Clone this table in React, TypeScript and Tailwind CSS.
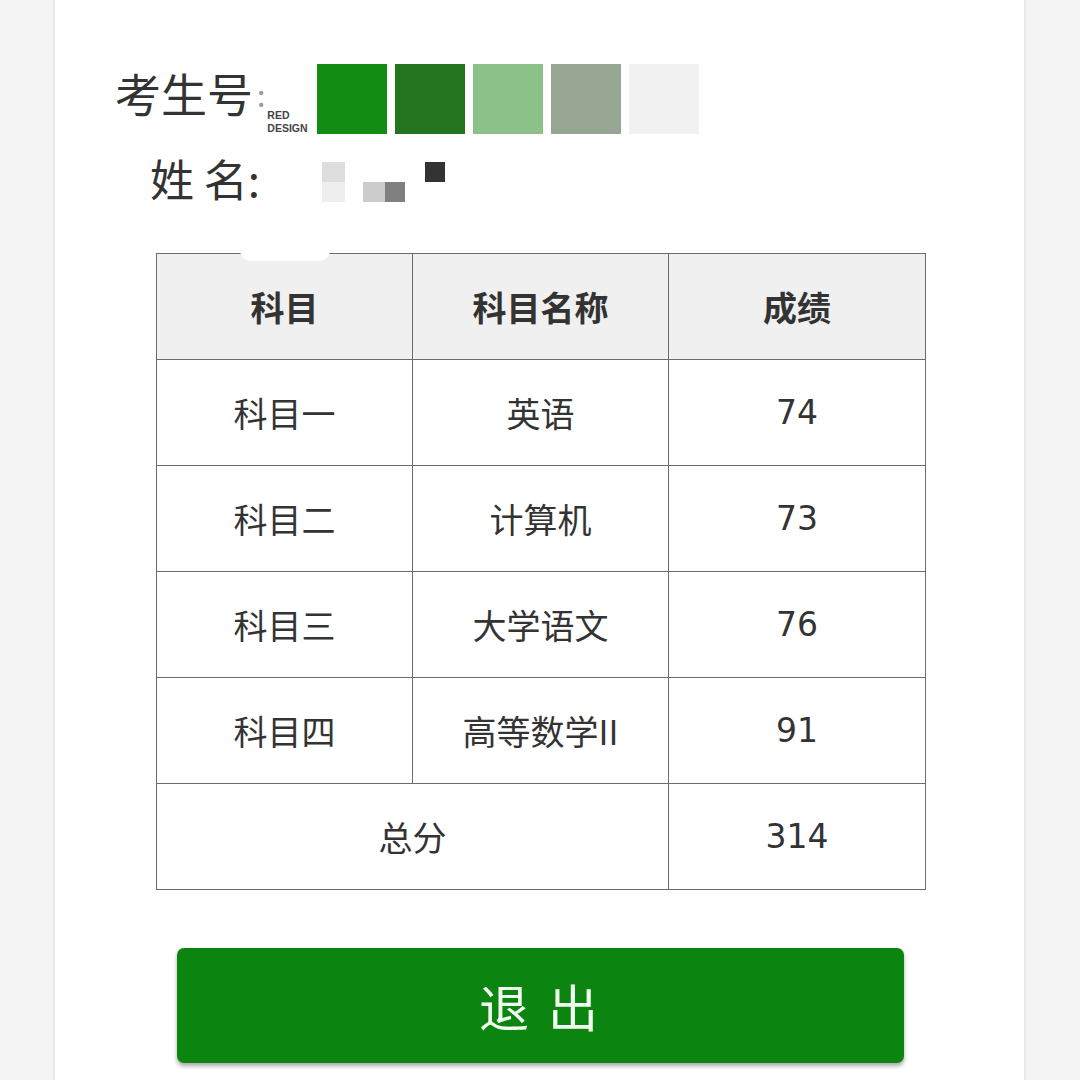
const rows = [
  { code: "科目一", name: "英语", score: "74" },
  { code: "科目二", name: "计算机", score: "73" },
  { code: "科目三", name: "大学语文", score: "76" },
  { code: "科目四", name: "高等数学II", score: "91" },
];

const swatches = ["bg-[#138c13]", "bg-[#24741f]", "bg-[#8cc28a]", "bg-[#97a693]", "bg-[#f1f1f1]"];

export default function App() {
  return (
    <div className="flex h-[1080px] w-[1080px] overflow-hidden bg-[#f4f4f4] font-['Noto_Sans_CJK_SC',sans-serif] text-[#333]">
      <div className="ml-[53px] h-full w-[973px] border-x-2 border-[#e8e8e8] bg-white">
        {/* 考生号 + colour strip */}
        <div className="mt-[64px] flex h-[70px] pl-[60px]">
          <div className="mt-[3px] text-[46px] leading-[50px]">考生号</div>
          <div className="ml-[4px] mt-[10px] text-[30px] leading-[40px] text-[#999]">:</div>
          <div className="ml-[2px] flex w-[50px] items-end font-['Liberation_Sans_Narrow','Liberation_Sans',sans-serif] text-[10.5px] font-bold leading-[12.5px] text-[#444]">
            <span>
              RED
              <br />
              DESIGN
            </span>
          </div>
          <div className="flex gap-[8px]">
            {swatches.map((s) => (
              <div key={s} className={`h-[70px] w-[70px] ${s}`} />
            ))}
          </div>
        </div>

        {/* 姓名 */}
        <div className="mt-[22px] flex h-[48px] items-start pl-[95px]">
          <div className="-mt-[2px] text-[44px] leading-[48px]">姓 名:</div>
          <div className="ml-[62px] mt-[6px] flex">
            <div className="flex flex-col">
              <div className="h-[20px] w-[23px] bg-[#dddddd]" />
              <div className="h-[20px] w-[23px] bg-[#eeeeee]" />
            </div>
            <div className="ml-[18px] mt-[20px] h-[20px] w-[22px] bg-[#cccccc]" />
            <div className="mt-[20px] h-[20px] w-[20px] bg-[#808080]" />
            <div className="ml-[20px] h-[20px] w-[20px] bg-[#333333]" />
          </div>
        </div>

        {/* table */}
        <div className="relative ml-[101px] mt-[49px] w-[770px]">
          <div className="absolute left-[84px] top-[-14px] h-[22px] w-[90px] rounded-full bg-white" />
          <table className="w-full border-collapse text-center text-[34px]">
            <thead>
              <tr className="h-[106px] bg-[#f0f0f0] font-bold">
                <th className="w-[256px] border-[1.5px] border-[#6b6b6b]">科目</th>
                <th className="w-[256px] border-[1.5px] border-[#6b6b6b]">科目名称</th>
                <th className="border-[1.5px] border-[#6b6b6b]">成绩</th>
              </tr>
            </thead>
            <tbody>
              {rows.map((r) => (
                <tr key={r.code} className="h-[106px]">
                  <td className="border-[1.5px] border-[#6b6b6b]">{r.code}</td>
                  <td className="border-[1.5px] border-[#6b6b6b]">{r.name}</td>
                  <td className="border-[1.5px] border-[#6b6b6b] font-['DejaVu_Sans',sans-serif] text-[33px]">{r.score}</td>
                </tr>
              ))}
              <tr className="h-[106px]">
                <td colSpan={2} className="border-[1.5px] border-[#6b6b6b]">总分</td>
                <td className="border-[1.5px] border-[#6b6b6b] font-['DejaVu_Sans',sans-serif] text-[33px]">314</td>
              </tr>
            </tbody>
          </table>
        </div>

        {/* button */}
        <div className="ml-[122px] mt-[58px] flex h-[115px] w-[727px] items-center justify-center rounded-[7px] bg-[#0c8410] text-[50px] tracking-[4px] text-[#f0fff0] shadow-[0_3px_4px_rgba(0,0,0,0.35)]">
          退 出
        </div>
      </div>
    </div>
  );
}
